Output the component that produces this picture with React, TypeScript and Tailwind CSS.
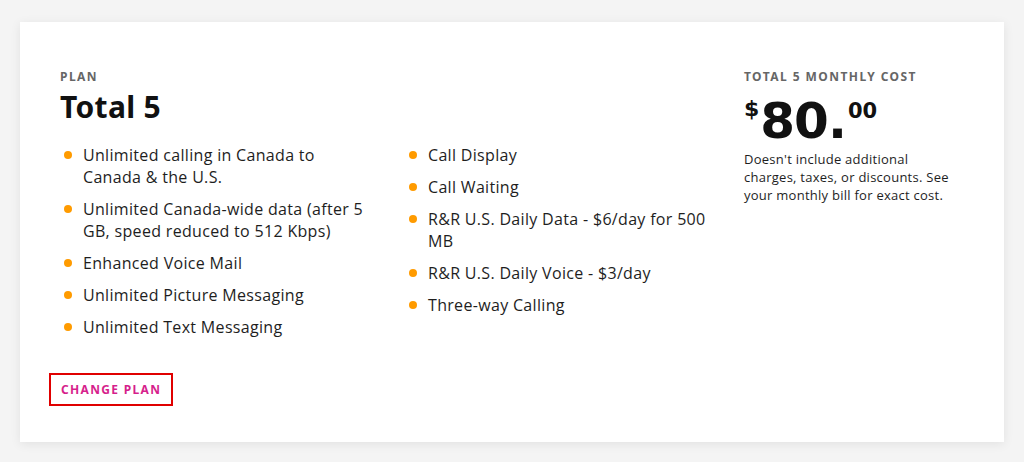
import React from 'react';

const LEFT_FEATURES = [
  'Unlimited calling in Canada to Canada & the U.S.',
  'Unlimited Canada-wide data (after 5 GB, speed reduced to 512 Kbps)',
  'Enhanced Voice Mail',
  'Unlimited Picture Messaging',
  'Unlimited Text Messaging',
];

const RIGHT_FEATURES = [
  'Call Display',
  'Call Waiting',
  'R&R U.S. Daily Data - $6/day for 500 MB',
  'R&R U.S. Daily Voice - $3/day',
  'Three-way Calling',
];

const heading = { fontFamily: '"Noto Sans", "Liberation Sans", sans-serif' };
const price = { fontFamily: '"DejaVu Sans", "Noto Sans", sans-serif' };
const body = { fontFamily: '"Open Sans", "Noto Sans", sans-serif' };

function FeatureList({ items, width }: { items: string[]; width: string }) {
  return (
    <ul className={`flex flex-col gap-[10px] ${width}`}>
      {items.map((f) => (
        <li key={f} className="flex items-start gap-[11px] text-[16px] leading-[22px] tracking-[0.02em] text-[#1e1e1e]">
          <span className="mt-[7px] h-[8px] w-[8px] shrink-0 rounded-full bg-[#ff9b00]" />
          <span>{f}</span>
        </li>
      ))}
    </ul>
  );
}

export default function App() {
  return (
    <div className="min-h-[462px] w-full bg-[#f4f4f4] px-[20px] pt-[22px] pb-[20px]" style={body}>
      <div className="flex h-[420px] flex-col bg-white pl-[40px] pt-[48px] shadow-[0_2px_10px_rgba(0,0,0,0.08)]">
        <div className="flex">
          <div className="flex-1">
            <div className="text-[12px] font-bold uppercase leading-[14px] tracking-[0.12em] text-[#666]" style={heading}>
              Plan
            </div>
            <h1 className="mt-[5px] text-[30px] font-bold leading-[36px] tracking-[0.01em] text-[#111]" style={heading}>
              Total 5
            </h1>
            <div className="mt-[19px] flex gap-[37px] pl-[4px]">
              <FeatureList items={LEFT_FEATURES} width="w-[308px]" />
              <FeatureList items={RIGHT_FEATURES} width="w-[318px]" />
            </div>
          </div>
          <div className="w-[260px] pr-[40px]">
            <div className="text-[12px] font-bold uppercase leading-[14px] tracking-[0.12em] text-[#666]" style={heading}>
              Total 5 monthly cost
            </div>
            <div className="mt-[12px] flex h-[50px] items-start text-[#111]" style={price}>
              <span className="mt-[2px] text-[22px] font-bold leading-[22px]">$</span>
              <span className="ml-[1px] text-[50px] font-bold leading-[50px] tracking-[-0.02em]">80.</span>
              <span className="mt-[5px] ml-[2px] text-[21px] font-bold leading-[21px]">00</span>
            </div>
            <p className="mt-[4px] text-[13px] leading-[18px] tracking-[0.02em] text-[#1e1e1e]">
              Doesn't include additional charges, taxes, or discounts. See your monthly bill for exact cost.
            </p>
          </div>
        </div>
        <div className="mt-auto mb-[36px] -ml-[11px]">
          <button
            className="h-[33px] border-2 border-[#e00000] px-[10px] text-[12px] font-bold uppercase tracking-[0.11em] text-[#d61f8c]"
            style={heading}
          >
            Change plan
          </button>
        </div>
      </div>
    </div>
  );
}
